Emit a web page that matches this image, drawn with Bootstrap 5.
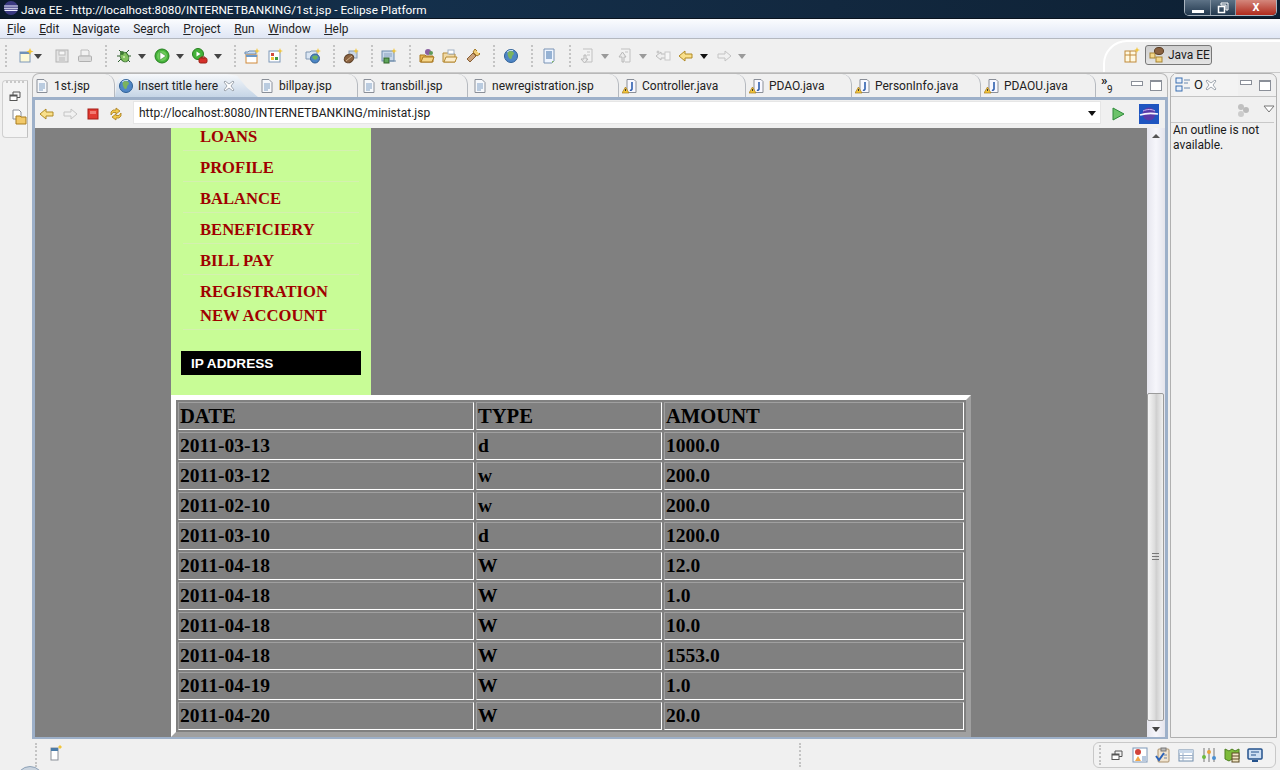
<!DOCTYPE html>
<html lang="en">
<head>
<meta charset="utf-8">
<title>Java EE - Eclipse Platform</title>
<link href="https://cdn.jsdelivr.net/npm/bootstrap@5.3.0/dist/css/bootstrap.min.css" rel="stylesheet">
<style>
html,body{margin:0;height:770px;overflow:hidden;background:#f0f0f0}
body{font-family:Roboto,"Open Sans",sans-serif;font-size:12px;color:#1a1a1a;width:1280px}
.shell{width:1280px;height:770px;position:relative;overflow:hidden}
svg{display:block;flex:none}
.ic{width:16px;height:16px}
.titlebar{height:19px;background:linear-gradient(90deg,#0b1a2c,#14304c 30%,#12283f 65%,#0d2033);color:#fff;padding-left:3px;gap:2px;border-bottom:1px solid #0a1420;font-size:11.8px;line-height:20px}
.winbtns{margin-left:auto;margin-right:3px;height:16px;width:93px;border:1px solid #a9b4bf;border-top:0;border-radius:0 0 5px 5px;overflow:hidden}
.wb{height:100%;background:linear-gradient(#5d7286,#22384e);color:#fff;border-right:1px solid #8a98a6}
.wb1{width:26px}.wb2{width:25px}.wb3{flex:1;background:linear-gradient(#d4877c,#b02a1c);border:0;font-weight:700;font-size:11px;line-height:15px}
.menubar{height:20px;background:linear-gradient(#fbfcfe,#dfe6f5);border-bottom:1px solid #b4b8bf;padding-left:7px;padding-top:1px;gap:13.5px;line-height:19px;color:#222;font-size:11.9px}
.toolbar{height:34px;padding-left:5px;padding-top:1px;background:#f0f0f0;border-bottom:1px solid #c9c9c9}
.sep{width:2px;height:22px;margin:0 8px 0 12px;border-left:2px dotted #c4c4c4}
.sep1{margin-left:0;margin-right:11px}
.sep2{margin-right:9px}
.caret{width:8px;height:8px}
.ic + .ic{margin-left:7px}
.ic + .caret{margin-left:6px}
.caret + .ic{margin-left:8px}
.ic + .caret.tight{margin-left:0}
.caret.tight + .ic{margin-left:12px}
.persp{margin-left:auto;height:32px;width:177px;align-self:flex-end;border-top:2px solid #fff;border-left:2px solid #fff;border-top-left-radius:24px;padding-left:19px;gap:5px}
.jbtn{width:67px;height:20px;border:1px solid #787878;border-radius:3px;background:linear-gradient(#cfcfcf,#e4e4e4);gap:3px;padding-left:3px;margin-bottom:5px}
.mainrow{height:666px}
.lefttrim{width:32px;padding:7px 0 0 2px}
.trimbox{width:26px;height:58px;border:1px solid #d0d0d0;border-right-color:#c0c0c0;border-radius:4px 0 0 4px;background:#f4f4f4;gap:5px}
.grip{width:18px;border-top:2px dotted #c8c8c8}
.editor{width:1136px;border-radius:6px 6px 0 0}
.tabstrip{height:24px;border:1px solid #b8b8b8;border-bottom:0;border-radius:7px 7px 0 0;background:#f0f0f0}
.etab{height:23px;padding-left:3px;gap:4px;border-right:1px solid #b5b9bf;border-top-right-radius:10px;white-space:nowrap;flex:none;color:#222}
.t1{width:82px;padding-left:1px}.t2{width:143px;padding-left:3px}.t3{width:100px;padding-left:1px}.t4{width:110px}.t5{width:151px;padding-left:4px}.t6{width:127px}.t7{width:106px}.t8{width:129px}.t9{width:115px}
.t2{background:linear-gradient(#f6f8fb,#c5d5e6);border:0;clip-path:polygon(0 100%,2px 30%,6px 8%,12px 0,112px 0,122px 8%,132px 60%,143px 100%)}
.closex{margin-left:1px;width:12px;height:12px}
.rtab .closex{margin-left:-1px}
.more{margin-left:5px;width:18px;line-height:9px;padding-top:2px;color:#222}
.chev{display:block;font-size:13px;font-weight:700}
.ovf{display:block;font-size:10px;padding-left:6px}
.vctl{margin-left:auto;gap:7px;padding-right:5px}
.minb{width:12px;height:5px;border:1px solid #8a8f98;background:#fff;margin-bottom:5px}
.maxb{width:12px;height:11px;border:1px solid #8a8f98;border-top-width:2px;background:#fff}
.edframe{height:642px;border-left:3px solid #9db0c9;border-right:3px solid #9db0c9;border-bottom:2px solid #9db0c9;border-top:3px solid #9db0c9}
.urlbar{height:28px;background:#f0f0f0;padding-left:4px}
.urlinput{margin-left:9px;width:968px;height:23px;background:#fff;border:1px solid #e6e6e6;padding-left:5px;padding-top:1px;line-height:21px;color:#222;margin-bottom:3px}
.urlcaret{margin-left:auto;margin-right:4px}
.ubtn{width:20px;height:20px;margin-left:13px}
.go{margin-left:9px}
.stage{height:609px}
.webpage{width:1112px;background:#808080;overflow:hidden;padding-left:136px}
.sidenav{width:200px;height:267px;background:#c8fc96;font-family:"Liberation Serif",serif;overflow:hidden}
.sidelist{list-style:none;margin:0 12px;padding:0}
.sideitem{padding:5px 0 1px 17px;border-bottom:1px solid #d4f0b0;line-height:24px;font-size:16.6px;font-weight:700;color:#a00000}
.sideitem.first{padding:0 0 4px 17px;line-height:18px}
.ipbox{margin:21px 10px 0;height:24px;background:#000;color:#fff;font-family:"Liberation Sans",sans-serif;font-weight:700;font-size:13.6px;line-height:25px;padding-left:10px}
table.ministat{border-collapse:separate;border-spacing:2px;table-layout:fixed;width:800px;border:5px solid;border-color:#fff #a0a0a0 #a0a0a0 #fff;font-family:"Liberation Serif",serif;color:#000;background:#808080}
.ministat th,.ministat td{height:28px;padding:0 1px;border:1px solid;border-color:#a0a0a0 #fff #fff #a0a0a0;font-weight:700;font-size:19.5px;line-height:24px;background:#808080;overflow:hidden;white-space:nowrap}
.ministat th{font-size:20.6px}
.c1{width:296px}.c2{width:186px}.c3{width:300px}
.vscroll{width:18px;background:linear-gradient(90deg,#e6e6ee,#f6f6fb 50%,#e4e4ec)}
.sbtn{height:17px}
.thumbzone{flex:1;padding:248px 0 0 0}
.thumb{height:328px;width:17px;border:1px solid #9b9b9b;border-radius:2px;background:linear-gradient(90deg,#f6f6f6,#dcdcdc 45%,#cfcfcf 55%,#f0f0f0)}
.gripv{width:7px;height:7px;border-top:1px solid #777;border-bottom:1px solid #777}
.gripv::after{content:"";display:block;margin-top:2px;border-top:1px solid #777}
.rightpanel{width:107px;margin-left:2px;border:1px solid #b0b0b0;border-radius:7px 7px 0 0;height:665px;background:#f0f0f0}
.rhead{height:23px;border-bottom:1px solid #c4c4c4;padding-left:3px}
.rtab{gap:3px;width:64px;height:22px;padding-left:1px;background:#f3f3f3;font-size:13px}
.rtool{height:26px;border-bottom:1px solid #c8c8c8;margin:0 2px 0 0;gap:12px;padding-left:64px}
.rtext{padding:0 2px;line-height:15px}
.statusbar{height:31px;position:relative}
.sdot{height:24px;border-left:2px dotted #c4c4c4}
.sdot1{margin-left:35px;margin-right:10px}
.sdot2{margin-left:736px}
.fastview{margin-left:auto;margin-right:4px;width:183px;height:26px;border:1px solid #c8c8c8;border-radius:6px;background:#f2f2f2;padding-left:5px}
.fastview .sdot{height:20px;margin-right:8px}
.fastview .ic + .ic{margin-left:7px}
.orb{position:absolute;left:16px;top:27px;width:28px;height:28px;border-radius:50%;background:#c9d3de;border:1px solid #8ea2b8}
</style>
</head>
<body>
<svg width="0" height="0" class="position-absolute">
<defs>
<symbol id="eclipse" viewBox="0 0 16 16"><circle cx="8" cy="8" r="7" fill="#3b3a82"/><path d="M1 6h14M1 8.200h14M1.500 10.400h13" stroke="#f0f0ff" stroke-width="1.100"/></symbol>
<symbol id="new" viewBox="0 0 16 16"><rect x="2" y="4" width="10" height="10" fill="#fdf9d8" stroke="#7c97b8"/><rect x="2" y="4" width="10" height="2" fill="#6f91b8"/><path d="M12 0l1 2.500 2.500 1-2.500 1-1 2.500-1-2.500-2.500-1 2.500-1z" fill="#f2c53a"/></symbol>
<symbol id="save" viewBox="0 0 16 16"><rect x="2" y="2" width="12" height="12" fill="#e4e4e4" stroke="#b4b4b4"/><rect x="5" y="3" width="6" height="4" fill="#f6f6f6" stroke="#bdbdbd"/><rect x="5" y="9" width="6" height="5" fill="#cfcfcf"/></symbol>
<symbol id="print" viewBox="0 0 16 16"><path d="M4 2h7l1 1v5H4z" fill="#f2f2f2" stroke="#bcbcbc"/><rect x="1.500" y="8" width="13" height="5.500" rx="1" fill="#dcdcdc" stroke="#b0b0b0"/></symbol>
<symbol id="bug" viewBox="0 0 16 16"><path d="M3 2l3 3M13 2l-3 3M1 8h3M15 8h-3M2 14l3-3M14 14l-3-3" stroke="#2e5e2e"/><ellipse cx="8.500" cy="9" rx="4" ry="5" fill="#82c05e" stroke="#3b7431" transform="rotate(-30 8.500 9)"/><circle cx="6" cy="5" r="2" fill="#3f7a34"/><circle cx="8" cy="9" r="1" fill="#d6efb8"/></symbol>
<symbol id="run" viewBox="0 0 16 16"><circle cx="8" cy="8" r="7" fill="#45b23a" stroke="#26801f"/><circle cx="8" cy="8" r="5" fill="#6ccb5a"/><path d="M6 4l6 4-6 4z" fill="#fff" stroke="#2b7d25" stroke-width=".5"/></symbol>
<symbol id="extrun" viewBox="0 0 16 16"><circle cx="6" cy="6" r="5.500" fill="#45b23a" stroke="#26801f"/><path d="M4.500 3.500l4 2.500-4 2.500z" fill="#fff"/><rect x="7" y="10" width="8" height="5" rx="1.500" fill="#d5302a" stroke="#982017"/><path d="M9 10V9h4v1" fill="none" stroke="#982017"/></symbol>
<symbol id="newsrv" viewBox="0 0 16 16"><path d="M1 4h3l1-1h7v3H1z" fill="#cbdcf0" stroke="#6b8db3"/><rect x="2" y="7" width="11" height="8" fill="#fff" stroke="#d08a3b"/><rect x="2" y="7" width="11" height="2" fill="#6b9ac9"/><path d="M13 0l.8 2.200 2.200.8-2.200.8-.8 2.200-.8-2.200-2.200-.8 2.200-.8z" fill="#f2c53a"/></symbol>
<symbol id="newann" viewBox="0 0 16 16"><rect x="2" y="3" width="11" height="11" fill="#fff" stroke="#7c97b8"/><path d="M4 5h3v3H4z" fill="#d14a3a"/><path d="M8 9h3v3H8z" fill="#3e9b43"/><path d="M4 9h3v3H4z" fill="#f2c53a"/><path d="M13 0l.8 2.200 2.200.8-2.200.8-.8 2.200-.8-2.200-2.200-.8 2.200-.8z" fill="#f2c53a"/></symbol>
<symbol id="newweb" viewBox="0 0 16 16"><path d="M1 4h4l1-1h6v8H1z" fill="#dbe6f3" stroke="#8098b4"/><circle cx="10" cy="10.500" r="4.500" fill="#4d86c4" stroke="#2f5f93"/><path d="M7 9c2-2 5-2 6 0-1 3-4 4-6 0z" fill="#6db35a"/><path d="M13 0l.8 2.200 2.200.8-2.200.8-.8 2.200-.8-2.200-2.200-.8 2.200-.8z" fill="#f2c53a"/></symbol>
<symbol id="bean" viewBox="0 0 16 16"><rect x="6" y="3" width="8" height="7" fill="#c9d6e6" stroke="#8a9bb2"/><ellipse cx="6" cy="10.500" rx="5" ry="4" fill="#8a6240" stroke="#5a3d24" transform="rotate(-30 6 10.500)"/><path d="M3 13l6-5" stroke="#d4b48c"/><path d="M13 0l.8 2.200 2.200.8-2.200.8-.8 2.200-.8-2.200-2.200-.8 2.200-.8z" fill="#f2c53a"/></symbol>
<symbol id="srv" viewBox="0 0 16 16"><rect x="1" y="3" width="12" height="10" fill="#c9d8ea" stroke="#6f8cab"/><path d="M3 6h8M3 8h8" stroke="#8aa3bf"/><rect x="3" y="10" width="5" height="5" fill="#5fa55a" stroke="#2f6428"/><path d="M8 13h7" stroke="#6f8cab"/><path d="M13 0l.8 2.200 2.200.8-2.200.8-.8 2.200-.8-2.200-2.200-.8 2.200-.8z" fill="#f2c53a"/></symbol>
<symbol id="openf" viewBox="0 0 16 16"><circle cx="9" cy="4" r="3" fill="#8a5fa0"/><circle cx="12" cy="5" r="2" fill="#5f9a5a"/><path d="M1 7h5l1 1h7v6H1z" fill="#e8b24d" stroke="#a97820"/><path d="M2 14l2-5h11l-2 5z" fill="#f6d68a" stroke="#a97820"/></symbol>
<symbol id="opene" viewBox="0 0 16 16"><path d="M1 5h5l1 1h6v8H1z" fill="#f0d9a6" stroke="#b58a34"/><path d="M2 14l2-5h11l-2 5z" fill="#fbeccb" stroke="#b58a34"/><rect x="6" y="2" width="6" height="4" fill="#fff" stroke="#9fb0c4"/></symbol>
<symbol id="torch" viewBox="0 0 16 16"><path d="M10 1l5 5-3 2-4-4z" fill="#f0cc78" stroke="#a47a28"/><path d="M8 5l3 3-6 6-3-3z" fill="#c9a27a" stroke="#8a5f34"/><path d="M12 3l2 2" stroke="#fff6c8"/></symbol>
<symbol id="globe" viewBox="0 0 16 16"><circle cx="8" cy="8" r="6.500" fill="#4f86c6" stroke="#2d5f96"/><path d="M5 4c2-2 5-1 6 1 0 2-2 2-2 4s-2 3-3 1-2-4-1-6z" fill="#7bb35e"/><path d="M4 4a6 6 0 0 1 6-1.500" stroke="#cfe3f7" fill="none"/></symbol>
<symbol id="sheet" viewBox="0 0 16 16"><path d="M3 1h10v12l-2 2H3z" fill="#eef5ff" stroke="#7a93b4"/><path d="M5 4h6M5 6h6M5 8h6M5 10h6" stroke="#3d6fa8"/><path d="M11 15l2-2h-2z" fill="#8fc168"/></symbol>
<symbol id="nextann" viewBox="0 0 16 16"><path d="M4 1h9v13H6" fill="#f2f2f2" stroke="#c0c0c0"/><path d="M5 7v4H2l3.500 4L9 11H7V7z" fill="#ebebeb" stroke="#b8b8b8"/><path d="M8 4h3M8 7h3" stroke="#c4c4c4"/></symbol>
<symbol id="prevann" viewBox="0 0 16 16"><path d="M4 1h9v13H8" fill="#f2f2f2" stroke="#c0c0c0"/><path d="M5 14v-5H2l3.500-5L9 9H7v5z" fill="#ebebeb" stroke="#b8b8b8"/><path d="M8 4h3" stroke="#c4c4c4"/></symbol>
<symbol id="lastedit" viewBox="0 0 16 16"><path d="M1 8l5-4v2h5v4H6v2z" fill="#efefef" stroke="#bcbcbc"/><rect x="10" y="4" width="5" height="8" fill="#f6f6f6" stroke="#c8c8c8"/><circle cx="3" cy="4" r="1.500" fill="#c8c8c8"/></symbol>
<symbol id="back" viewBox="0 0 16 16"><path d="M1 8l6-5v3h7v4H7v3z" fill="#f9e08b" stroke="#b18a24"/></symbol>
<symbol id="fwdoff" viewBox="0 0 16 16"><path d="M15 8L9 3v3H2v4h7v3z" fill="#f1f1f1" stroke="#c4c4c4"/></symbol>
<symbol id="stop" viewBox="0 0 16 16"><rect x="3" y="3" width="10" height="10" fill="#e23a32" stroke="#a51c16"/><rect x="5" y="5" width="6" height="3" fill="#f27a72"/></symbol>
<symbol id="refresh" viewBox="0 0 16 16"><path d="M8 2l4 3-4 3V6.500H5L3 9V6l2-2h3z" fill="#f2c94c" stroke="#a97d1c" stroke-width=".8"/><path d="M8 14l-4-3 4-3v1.500h3l2-2.500v3l-2 2H8z" fill="#f2c94c" stroke="#a97d1c" stroke-width=".8"/></symbol>
<symbol id="go" viewBox="0 0 16 16"><path d="M3 2l11 6-11 6z" fill="#6cc36a" stroke="#2e8b3a"/></symbol>
<symbol id="orbit" viewBox="0 0 20 20"><rect width="20" height="20" fill="#1f55c0"/><circle cx="10" cy="10" r="6.500" fill="#5a3aa8"/><path d="M4 7c4-2 9-2 12 0" stroke="#c8b8f0" fill="none"/><path d="M1 11c6-2 12-2 18-1" stroke="#f4f4ff" fill="none" stroke-width="1.600"/></symbol>
<symbol id="jsp" viewBox="0 0 16 16"><path d="M3 1.500h7l3 3v10H3z" fill="#f6f8fb" stroke="#8a8f98"/><path d="M5 6h6M5 8h6M5 10h6M5 12h4" stroke="#7f9fc4"/></symbol>
<symbol id="java" viewBox="0 0 16 16"><path d="M5 1.500h7l2 2v11H5z" fill="#f8f8ff" stroke="#8a8f98"/><path d="M10 4v7c0 1-1 1.500-2 1" stroke="#2f5fb0" stroke-width="1.600" fill="none"/><path d="M3.500 9L7 15H0z" fill="#f2c53a" stroke="#a97d1c" stroke-width=".7"/><path d="M3.500 11v2" stroke="#333"/></symbol>
<symbol id="outl" viewBox="0 0 16 16"><rect x="1" y="1" width="6" height="5" fill="#e8f0fb" stroke="#3a6fb0"/><rect x="1" y="9" width="6" height="5" fill="#e8f0fb" stroke="#3a6fb0"/><path d="M9 3h6M9 6h4M9 11h6" stroke="#6a8ab0"/></symbol>
<symbol id="xic" viewBox="0 0 12 12"><path d="M2 1l4 3 4-3 1 1-3 4 3 4-1 1-4-3-4 3-1-1 3-4-3-4z" fill="#fff" stroke="#a0a7b0"/></symbol>
<symbol id="dots" viewBox="0 0 16 16"><circle cx="6" cy="5" r="3" fill="#c0c0c0"/><circle cx="11" cy="8" r="3" fill="#bbb"/><circle cx="6" cy="12" r="3" fill="#ccc"/></symbol>
<symbol id="persnew" viewBox="0 0 16 16"><rect x="1" y="4" width="11" height="11" fill="#fff9e2" stroke="#c08a3a"/><path d="M1 8h11M6 4v11" stroke="#c08a3a"/><path d="M13 0l.8 2.200 2.200.8-2.200.8-.8 2.200-.8-2.200-2.200-.8 2.200-.8z" fill="#f2c53a"/></symbol>
<symbol id="jee" viewBox="0 0 16 16"><rect x="1" y="6" width="5" height="5" fill="#f4d78a" stroke="#a88432"/><rect x="7" y="10" width="6" height="5" fill="#f4d78a" stroke="#a88432"/><ellipse cx="10" cy="4" rx="4.500" ry="3.500" fill="#8a6240" stroke="#5a3d24"/></symbol>
<symbol id="restore" viewBox="0 0 16 16"><rect x="3" y="7" width="7" height="5.500" fill="#fff" stroke="#555"/><rect x="3" y="7" width="7" height="1.500" fill="#555"/><path d="M6 7V4h7v5.500h-3" fill="none" stroke="#555"/></symbol>
<symbol id="folders" viewBox="0 0 16 16"><path d="M2 1h6l2 2v7H2z" fill="#fff" stroke="#8a8f98"/><path d="M5 7h4l1 1h5v7H5z" fill="#f2c96a" stroke="#a97d1c"/></symbol>
<symbol id="fast" viewBox="0 0 16 16"><rect x="4" y="3" width="7" height="12" fill="#fff" stroke="#8a8f98"/><rect x="4" y="3" width="7" height="3" fill="#4a7ba8"/><path d="M13 0l2 2-2 2-2-2z" fill="#f2c53a"/></symbol>
<symbol id="sv1" viewBox="0 0 16 16"><rect x="1" y="1" width="14" height="14" fill="#fff" stroke="#7c97b8"/><circle cx="6" cy="5" r="3" fill="#d2433a"/><path d="M3 14l3-5 3 5z" fill="#f2a84a"/><rect x="10" y="9" width="4" height="5" fill="#b6c8de"/></symbol>
<symbol id="sv2" viewBox="0 0 16 16"><rect x="3" y="2" width="11" height="13" rx="1" fill="#f0e4d0" stroke="#a98f6a"/><rect x="6" y="1" width="5" height="3" fill="#bbb" stroke="#777"/><path d="M1 9l3 4 5-7" fill="none" stroke="#2a62b8" stroke-width="2"/><path d="M9 8h3M9 11h3" stroke="#6c85a6"/></symbol>
<symbol id="sv3" viewBox="0 0 16 16"><rect x="1" y="3" width="14" height="11" fill="#fff" stroke="#6f8cab"/><rect x="1" y="3" width="14" height="3" fill="#c9d8ea"/><path d="M1 8.500h14M1 11h14M5 6v8" stroke="#9db0c9"/></symbol>
<symbol id="sv4" viewBox="0 0 16 16"><path d="M3 1v14M8 1v14M13 1v14" stroke="#777"/><circle cx="3" cy="10" r="2" fill="#6cbb3c"/><circle cx="8" cy="5" r="2" fill="#e8a13a"/><circle cx="13" cy="11" r="2" fill="#4a8fd1"/></symbol>
<symbol id="sv5" viewBox="0 0 16 16"><path d="M1 2l4 2 3-2 3 2 4-2v10l-4 2-3-2-3 2-4-2z" fill="#7dbb3a" stroke="#4c7f1f"/><rect x="8" y="6" width="7" height="9" fill="#f2e6c4" stroke="#5a4a24"/><path d="M8 9h7M8 12h7" stroke="#5a4a24"/></symbol>
<symbol id="sv6" viewBox="0 0 16 16"><rect x="1" y="2" width="14" height="10" rx="1" fill="#cfe0f4" stroke="#24528c" stroke-width="1.500"/><path d="M4 5h8M4 8h5" stroke="#24528c"/><path d="M5 14h6" stroke="#24528c" stroke-width="2"/></symbol>
<symbol id="dn" viewBox="0 0 8 8"><path d="M0 2h8L4 7z" fill="#444"/></symbol>
<symbol id="dnoff" viewBox="0 0 8 8"><path d="M0 2h8L4 7z" fill="#9a9a9a"/></symbol>
<symbol id="dnblack" viewBox="0 0 8 8"><path d="M0 2h8L4 7z" fill="#111"/></symbol>
</defs>
</svg>
<div class="shell d-flex flex-column">
  <div class="titlebar d-flex align-items-start">
    <svg class="ic"><use href="#eclipse"/></svg>
    <span>Java EE - http://localhost:8080/INTERNETBANKING/1st.jsp - Eclipse Platform</span>
    <div class="winbtns d-flex">
      <div class="wb wb1 d-flex align-items-end justify-content-center"><svg width="12" height="8"><rect y="3" width="12" height="3" fill="#fff"/></svg></div>
      <div class="wb wb2 d-flex align-items-center justify-content-center"><svg width="12" height="12"><path d="M4 1h7v7H9V3H4z" fill="none" stroke="#fff"/><rect x="1.500" y="4.500" width="6" height="6" fill="none" stroke="#fff" stroke-width="1.500"/></svg></div>
      <div class="wb wb3 text-center">X</div>
    </div>
  </div>
  <div class="menubar d-flex">
    <span><u>F</u>ile</span><span><u>E</u>dit</span><span><u>N</u>avigate</span><span>Se<u>a</u>rch</span><span><u>P</u>roject</span><span><u>R</u>un</span><span><u>W</u>indow</span><span><u>H</u>elp</span>
  </div>
  <div class="toolbar d-flex align-items-center">
    <div class="sep sep1"></div>
    <svg class="ic"><use href="#new"/></svg><svg class="caret tight"><use href="#dn"/></svg><svg class="ic"><use href="#save"/></svg><svg class="ic"><use href="#print"/></svg>
    <div class="sep sep2"></div>
    <svg class="ic"><use href="#bug"/></svg><svg class="caret"><use href="#dn"/></svg><svg class="ic"><use href="#run"/></svg><svg class="caret"><use href="#dn"/></svg><svg class="ic"><use href="#extrun"/></svg><svg class="caret"><use href="#dn"/></svg>
    <div class="sep"></div>
    <svg class="ic"><use href="#newsrv"/></svg><svg class="ic"><use href="#newann"/></svg>
    <div class="sep"></div>
    <svg class="ic"><use href="#newweb"/></svg>
    <div class="sep"></div>
    <svg class="ic"><use href="#bean"/></svg>
    <div class="sep"></div>
    <svg class="ic"><use href="#srv"/></svg>
    <div class="sep"></div>
    <svg class="ic"><use href="#openf"/></svg><svg class="ic"><use href="#opene"/></svg><svg class="ic"><use href="#torch"/></svg>
    <div class="sep"></div>
    <svg class="ic"><use href="#globe"/></svg>
    <div class="sep"></div>
    <svg class="ic"><use href="#sheet"/></svg>
    <div class="sep"></div>
    <svg class="ic"><use href="#nextann"/></svg><svg class="caret"><use href="#dnoff"/></svg><svg class="ic"><use href="#prevann"/></svg><svg class="caret"><use href="#dnoff"/></svg><svg class="ic"><use href="#lastedit"/></svg><svg class="ic"><use href="#back"/></svg><svg class="caret"><use href="#dnblack"/></svg><svg class="ic"><use href="#fwdoff"/></svg><svg class="caret"><use href="#dnoff"/></svg>
    <div class="persp d-flex align-items-center">
      <svg class="ic mb-1"><use href="#persnew"/></svg>
      <div class="jbtn d-flex align-items-center"><svg class="ic"><use href="#jee"/></svg><span>Java EE</span></div>
    </div>
  </div>
  <div class="mainrow d-flex">
    <div class="lefttrim">
      <div class="trimbox d-flex flex-column align-items-center">
        <div class="grip"></div>
        <svg class="ic"><use href="#restore"/></svg>
        <svg class="ic"><use href="#folders"/></svg>
      </div>
    </div>
    <div class="editor d-flex flex-column">
      <div class="tabstrip d-flex">
        <div class="etab t1 d-flex align-items-center"><svg class="ic"><use href="#jsp"/></svg><span>1st.jsp</span></div>
        <div class="etab t2 d-flex align-items-center"><svg class="ic"><use href="#globe"/></svg><span>Insert title here</span><svg class="closex"><use href="#xic"/></svg></div>
        <div class="etab t3 d-flex align-items-center"><svg class="ic"><use href="#jsp"/></svg><span>billpay.jsp</span></div>
        <div class="etab t4 d-flex align-items-center"><svg class="ic"><use href="#jsp"/></svg><span>transbill.jsp</span></div>
        <div class="etab t5 d-flex align-items-center"><svg class="ic"><use href="#jsp"/></svg><span>newregistration.jsp</span></div>
        <div class="etab t6 d-flex align-items-center"><svg class="ic"><use href="#java"/></svg><span>Controller.java</span></div>
        <div class="etab t7 d-flex align-items-center"><svg class="ic"><use href="#java"/></svg><span>PDAO.java</span></div>
        <div class="etab t8 d-flex align-items-center"><svg class="ic"><use href="#java"/></svg><span>PersonInfo.java</span></div>
        <div class="etab t9 d-flex align-items-center"><svg class="ic"><use href="#java"/></svg><span>PDAOU.java</span></div>
        <div class="more"><span class="chev">»</span><span class="ovf">9</span></div>
        <div class="vctl d-flex align-items-center"><div class="minb"></div><div class="maxb"></div></div>
      </div>
      <div class="edframe d-flex flex-column">
        <div class="urlbar d-flex align-items-center">
          <svg class="ic"><use href="#back"/></svg><svg class="ic"><use href="#fwdoff"/></svg><svg class="ic"><use href="#stop"/></svg><svg class="ic"><use href="#refresh"/></svg>
          <div class="urlinput d-flex align-items-center"><span>http://localhost:8080/INTERNETBANKING/ministat.jsp</span><svg class="caret urlcaret"><use href="#dnblack"/></svg></div>
          <svg class="ic go"><use href="#go"/></svg>
          <svg class="ubtn"><use href="#orbit"/></svg>
        </div>
        <div class="stage d-flex">
          <div class="webpage">
            <div class="sidenav">
              <ul class="sidelist">
                <li class="sideitem first">LOANS</li>
                <li class="sideitem">PROFILE</li>
                <li class="sideitem">BALANCE</li>
                <li class="sideitem">BENEFICIERY</li>
                <li class="sideitem">BILL PAY</li>
                <li class="sideitem">REGISTRATION<br>NEW ACCOUNT</li>
              </ul>
              <div class="ipbox">IP ADDRESS</div>
            </div>
            <table class="ministat">
              <colgroup><col class="c1"><col class="c2"><col class="c3"></colgroup>
              <tr><th>DATE</th><th>TYPE</th><th>AMOUNT</th></tr>
              <tr><td>2011-03-13</td><td>d</td><td>1000.0</td></tr>
              <tr><td>2011-03-12</td><td>w</td><td>200.0</td></tr>
              <tr><td>2011-02-10</td><td>w</td><td>200.0</td></tr>
              <tr><td>2011-03-10</td><td>d</td><td>1200.0</td></tr>
              <tr><td>2011-04-18</td><td>W</td><td>12.0</td></tr>
              <tr><td>2011-04-18</td><td>W</td><td>1.0</td></tr>
              <tr><td>2011-04-18</td><td>W</td><td>10.0</td></tr>
              <tr><td>2011-04-18</td><td>W</td><td>1553.0</td></tr>
              <tr><td>2011-04-19</td><td>W</td><td>1.0</td></tr>
              <tr><td>2011-04-20</td><td>W</td><td>20.0</td></tr>
            </table>
          </div>
          <div class="vscroll d-flex flex-column">
            <div class="sbtn d-flex align-items-center justify-content-center"><svg width="8" height="8"><path d="M0 6h8L4 2z" fill="#555"/></svg></div>
            <div class="thumbzone"><div class="thumb d-flex align-items-center justify-content-center"><div class="gripv"></div></div></div>
            <div class="sbtn d-flex align-items-center justify-content-center"><svg class="caret"><use href="#dn"/></svg></div>
          </div>
        </div>
      </div>
    </div>
    <div class="rightpanel">
      <div class="rhead d-flex align-items-center">
        <div class="rtab d-flex align-items-center"><svg class="ic"><use href="#outl"/></svg><span>O</span><svg class="closex"><use href="#xic"/></svg></div>
        <div class="vctl d-flex align-items-center"><div class="minb"></div><div class="maxb"></div></div>
      </div>
      <div class="rtool d-flex align-items-center"><svg class="ic"><use href="#dots"/></svg><svg width="12" height="12"><path d="M1 2h10L6 8z" fill="#fff" stroke="#777"/></svg></div>
      <div class="rtext">An outline is not available.</div>
    </div>
  </div>
  <div class="statusbar d-flex align-items-center">
    <div class="sdot sdot1"></div>
    <svg class="ic mb-1"><use href="#fast"/></svg>
    <div class="sdot sdot2"></div>
    <div class="fastview d-flex align-items-center">
      <div class="sdot"></div>
      <svg class="ic"><use href="#restore"/></svg><svg class="ic"><use href="#sv1"/></svg><svg class="ic"><use href="#sv2"/></svg><svg class="ic"><use href="#sv3"/></svg><svg class="ic"><use href="#sv4"/></svg><svg class="ic"><use href="#sv5"/></svg><svg class="ic"><use href="#sv6"/></svg>
    </div>
    <div class="orb"></div>
  </div>
</div>
<script src="https://cdn.jsdelivr.net/npm/bootstrap@5.3.0/dist/js/bootstrap.bundle.min.js"></script>
</body>
</html>
